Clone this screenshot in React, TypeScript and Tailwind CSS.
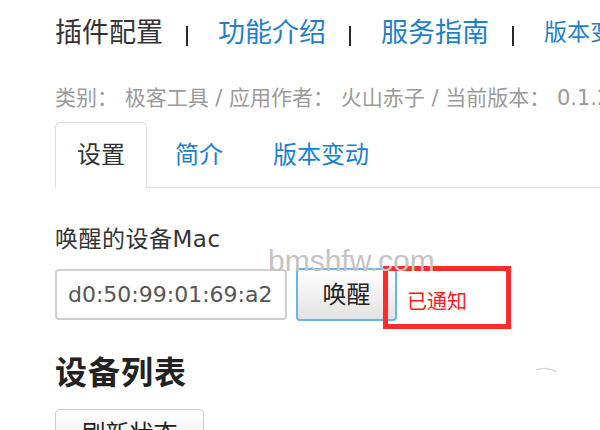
import { useState } from 'react';

const Sep = () => <span className="shrink-0 inline-block w-[2px] h-[20px] bg-[#2a2a2a] ml-[23px] mr-[30px] mt-[12px]" />;

const tabs = ['设置', '简介', '版本变动'];

export default function App() {
  const [active, setActive] = useState(0);
  const [mac, setMac] = useState('d0:50:99:01:69:a2');

  return (
    <div className="relative w-[600px] h-[430px] overflow-hidden bg-white text-[#333] font-['DejaVu_Sans','Noto_Sans_CJK_SC',sans-serif]">
      <div className="pl-[55px] pt-[15px]">
        {/* Top links */}
        <nav className="flex items-center h-[30px] whitespace-nowrap text-[27px] leading-none font-['Noto_Sans_CJK_SC',sans-serif]">
          <span className="shrink-0 text-[#333]">插件配置</span>
          <Sep />
          <a className="shrink-0 text-[#1f7fcc]">功能介绍</a>
          <Sep />
          <a className="shrink-0 text-[#1f7fcc]">服务指南</a>
          <Sep />
          <a className="shrink-0 text-[#1f7fcc] text-[23px]">版本变动</a>
        </nav>

        <p className="mt-[43px] text-[21px] leading-none text-[#9a9a9a] whitespace-nowrap">
          类别： 极客工具 / 应用作者： 火山赤子 / 当前版本： 0.1.2
        </p>

        {/* Tabs */}
        <ul className="mt-[13px] flex border-b border-[#dddddd] h-[66px] whitespace-nowrap">
          {tabs.map((t, i) => (
            <li
              key={t}
              onClick={() => setActive(i)}
              className={`-mb-px mr-[6px] px-[21px] flex items-center text-[24px] leading-none rounded-t-[5px] border cursor-pointer ${
                active === i ? 'border-[#dddddd] border-b-white text-[#333] bg-white' : 'border-transparent text-[#1a80cf]'
              }`}
            >
              {t}
            </li>
          ))}
        </ul>

        <label className="block mt-[40px] text-[23px] leading-none tracking-[0.5px] text-[#333]">唤醒的设备Mac</label>

        <div className="mt-[17px] flex items-start whitespace-nowrap">
          <input
            value={mac}
            onChange={(e) => setMac(e.target.value)}
            className="w-[232px] h-[51px] mt-px pl-[11px] border-2 border-[#cfcfcf] rounded-[4px] text-[22px] text-[#555] outline-none bg-white"
          />
          <button className="ml-[9px] w-[101px] h-[53px] rounded-[4px] border-2 border-[#6ab4ee] bg-gradient-to-b from-white to-[#e3e3e3] text-[24px] text-[#222] leading-none">
            唤醒
          </button>
          <span className="ml-[10px] mt-[24px] text-[20px] leading-none text-[#ff1a1a]">已通知</span>
        </div>

        <h2 className="mt-[33px] text-[32px] leading-none font-bold tracking-[1px] text-[#222] font-['Noto_Sans_CJK_SC',sans-serif]">设备列表</h2>

        <button className="mt-[23px] w-[149px] h-[50px] rounded-[5px] border border-[#cccccc] bg-gradient-to-b from-white to-[#e6e6e6] text-[24px] text-[#222] leading-none">
          刷新状态
        </button>
      </div>

      {/* red highlight around the status */}
      <div className="absolute left-[383px] top-[266px] w-[128px] h-[63px] border-[5px] border-[#ff2b2b]" />

      {/* site mark */}
      <span className="absolute left-[268px] top-[246px] text-[30px] leading-none text-[#c4c4c4] font-['Liberation_Sans',sans-serif] pointer-events-none">
        bmshfw.com
      </span>

      <svg className="absolute left-[533px] top-[364px]" width="28" height="12" viewBox="0 0 28 12">
        <path d="M3 6 Q13 2 24 8" stroke="#d6d6d6" strokeWidth="1.2" fill="none" />
      </svg>
    </div>
  );
}
